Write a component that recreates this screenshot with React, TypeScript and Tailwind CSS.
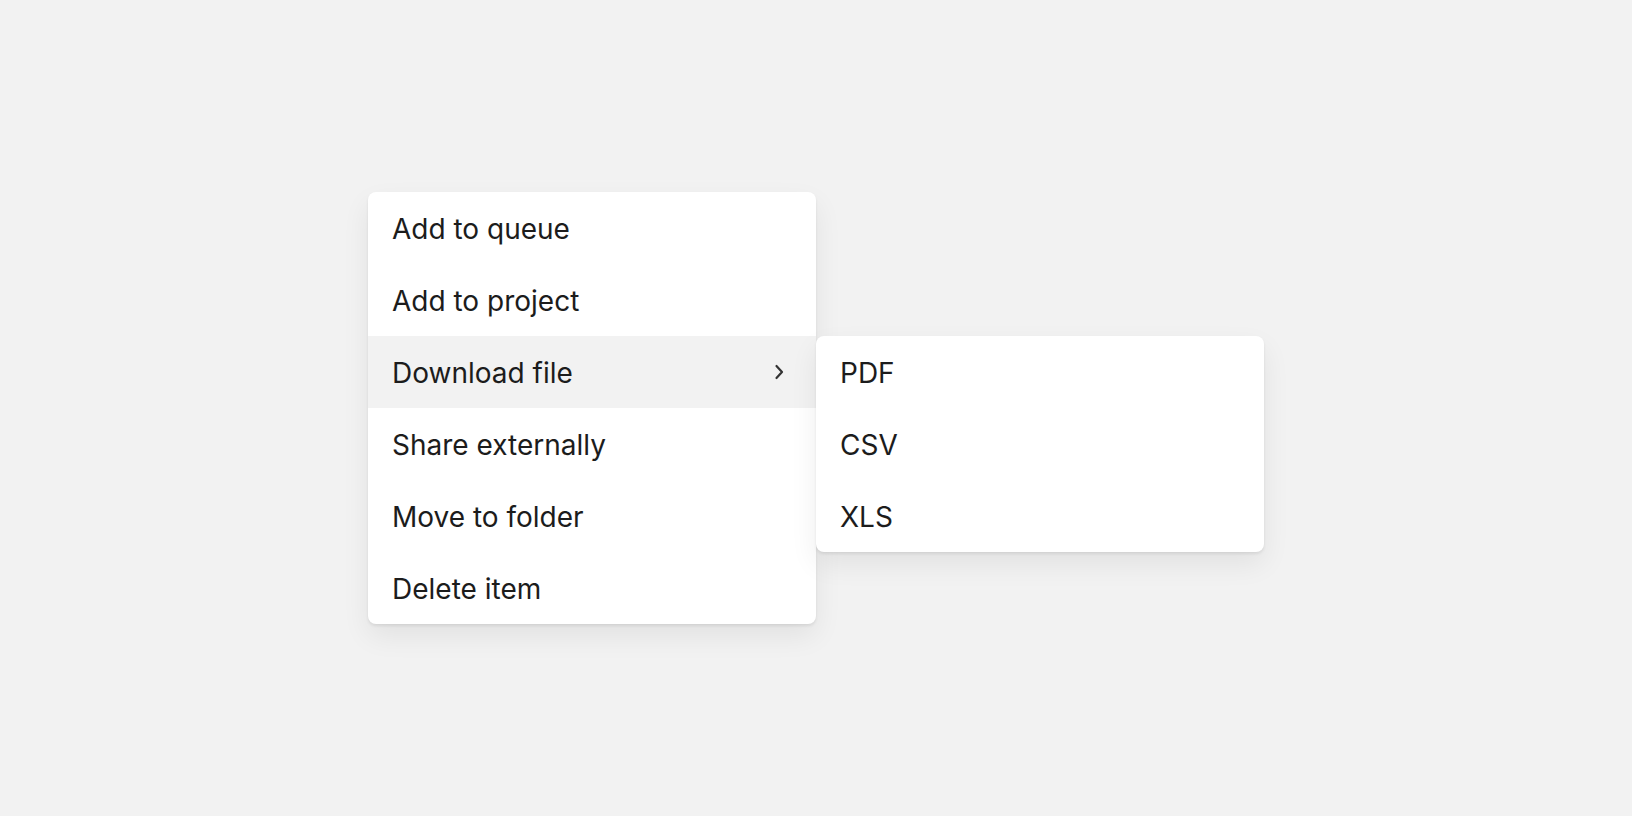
import { useState } from "react"

const items = ["Add to queue", "Add to project", "Download file", "Share externally", "Move to folder", "Delete item"]
const formats = ["PDF", "CSV", "XLS"]

export default function App() {
  const [open] = useState("Download file")

  return (
    <div
      className="flex h-screen w-full items-center justify-center bg-[#f2f2f2] text-[#1c1c1c]"
      style={{ fontFamily: "Inter, 'Noto Sans', sans-serif" }}
    >
      <div className="flex items-start">
        <div className="w-[448px] overflow-hidden rounded-lg bg-white shadow-[0_2px_3px_rgba(0,0,0,0.08),0_12px_28px_rgba(0,0,0,0.07)]">
          {items.map((label) => (
            <MenuItem key={label} label={label} active={label === open} sub={label === open} />
          ))}
        </div>
        <div className="mt-[144px] w-[448px] overflow-hidden rounded-lg bg-white shadow-[0_2px_3px_rgba(0,0,0,0.08),0_12px_28px_rgba(0,0,0,0.07)]">
          {formats.map((f) => (
            <MenuItem key={f} label={f} />
          ))}
        </div>
      </div>
    </div>
  )
}

function MenuItem({ label, active, sub }: { label: string; active?: boolean; sub?: boolean }) {
  return (
    <div className={`flex h-[72px] items-center justify-between px-6 pt-[2px] text-[28px] ${active ? "bg-[#f2f2f2]" : ""}`}>
      <span>{label}</span>
      {sub ? (
        <svg width="10" height="16" viewBox="0 0 10 16" fill="none" className="mr-2 -mt-[2px]">
          <path d="M2.5 2 8 8 2.5 14" stroke="#333333" strokeWidth="2.2" strokeLinecap="round" strokeLinejoin="round" />
        </svg>
      ) : null}
    </div>
  )
}
